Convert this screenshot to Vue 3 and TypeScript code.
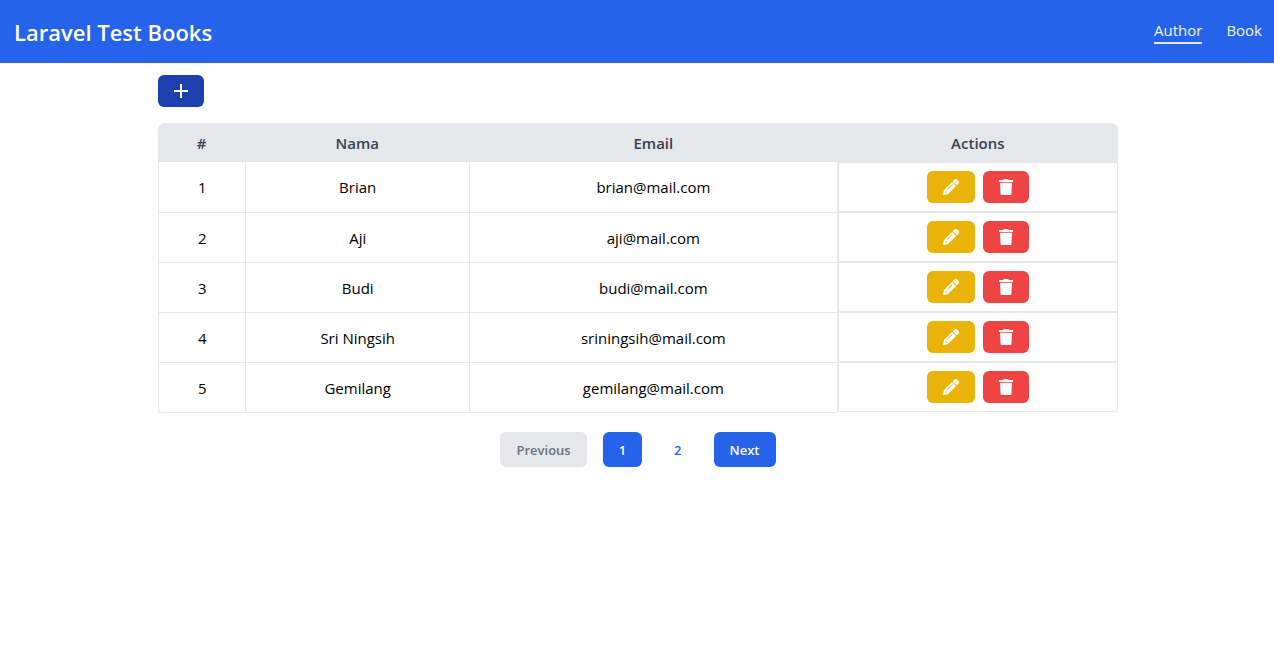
<script setup lang="ts">
import { computed, ref } from 'vue'

interface Author {
  id: number
  name: string
  email: string
}

const menu = ['Author', 'Book']
const active = ref('Author')
const page = ref(1)
const pages = [1, 2]

const authors: Author[] = [
  { id: 1, name: 'Brian', email: 'brian@mail.com' },
  { id: 2, name: 'Aji', email: 'aji@mail.com' },
  { id: 3, name: 'Budi', email: 'budi@mail.com' },
  { id: 4, name: 'Sri Ningsih', email: 'sriningsih@mail.com' },
  { id: 5, name: 'Gemilang', email: 'gemilang@mail.com' },
]

const isFirst = computed(() => page.value === 1)
const isLast = computed(() => page.value === pages.length)
</script>

<template>
  <div class="app">
    <header class="navbar">
      <h1 class="brand">Laravel Test Books</h1>
      <nav class="menu">
        <a
          v-for="item in menu"
          :key="item"
          href="#"
          class="menu-link"
          :class="{ active: item === active }"
          @click.prevent="active = item"
        >{{ item }}</a>
      </nav>
    </header>

    <main class="content">
      <div class="container">
        <button type="button" class="btn add" aria-label="Add author">
          <svg viewBox="0 0 14 14" width="14" height="14" aria-hidden="true">
            <path d="M6 0h2v6h6v2H8v6H6V8H0V6h6z" />
          </svg>
        </button>

        <div class="table-wrap">
          <table class="table">
            <colgroup>
              <col class="col-no" />
              <col class="col-name" />
              <col class="col-email" />
              <col />
            </colgroup>
            <thead>
              <tr>
                <th scope="col">#</th>
                <th scope="col">Nama</th>
                <th scope="col">Email</th>
                <th scope="col">Actions</th>
              </tr>
            </thead>
            <tbody>
              <tr v-for="author in authors" :key="author.id">
                <td>{{ author.id }}</td>
                <td>{{ author.name }}</td>
                <td class="email">{{ author.email }}</td>
                <td class="actions-cell">
                  <div class="actions">
                    <button type="button" class="btn edit" :aria-label="`Edit ${author.name}`">
                      <svg viewBox="0 0 512 512" width="16" height="16" aria-hidden="true">
                        <path fill-rule="evenodd" d="M290 92L46 336c-10 10-16 20-19 34L1 484c-3 16 11 30 27 27l114-26c14-3 24-9 34-19L420 222zM128 344c-5-5-5-13 0-18l158-158c5-5 13-5 18 0s5 13 0 18L146 344c-5 5-13 5-18 0zM84 388h40v40l-30 8-18-18z" />
                        <path d="M493 59c25 25 25 65 0 90l-53 53L310 72l53-53c25-25 65-25 90 0z" />
                      </svg>
                    </button>
                    <button type="button" class="btn delete" :aria-label="`Delete ${author.name}`">
                      <svg viewBox="0 0 448 512" width="14" height="16" aria-hidden="true">
                        <path d="M440 32H312l-9-19C299 5 291 0 282 0H166c-9 0-17 5-22 13l-8 19H8C4 32 0 36 0 40v48c0 4 4 8 8 8h432c4 0 8-4 8-8V40c0-4-4-8-8-8zM32 122l20 370c1 12 8 20 20 20h304c12 0 19-8 20-20l20-370z" />
                      </svg>
                    </button>
                  </div>
                </td>
              </tr>
            </tbody>
          </table>
        </div>

        <nav class="pagination" aria-label="Pagination">
          <button type="button" class="page-btn solid" :disabled="isFirst" @click="page--">Previous</button>
          <button
            v-for="n in pages"
            :key="n"
            type="button"
            class="page-btn"
            :class="{ solid: n === page }"
            @click="page = n"
          >{{ n }}</button>
          <button type="button" class="page-btn solid" :disabled="isLast" @click="page++">Next</button>
        </nav>
      </div>
    </main>
  </div>
</template>

<style>
body {
  margin: 0;
  background: #fff;
}
</style>

<style scoped>
.app {
  font-family: 'Segoe UI', 'Open Sans', 'Noto Sans', sans-serif;
  font-size: 15px;
  line-height: 24px;
  color: #000;
}

.app *,
.app *::before {
  box-sizing: border-box;
}

.navbar {
  display: flex;
  align-items: center;
  justify-content: space-between;
  min-height: 63px;
  padding: 0 12px 0 14px;
  background: #2563eb;
  color: #fff;
}

.brand {
  margin: 0;
  font-size: 22px;
  line-height: 32px;
  font-weight: 600;
}

.menu {
  display: flex;
  gap: 24px;
}

.menu-link {
  padding-bottom: 2px;
  line-height: 20px;
  color: #f3f4f6;
  text-decoration: none;
  border-bottom: 2px solid transparent;
}

.menu-link.active {
  border-bottom-color: #e5e7eb;
}

.content {
  padding: 12px 0 0 2px;
}

.container {
  max-width: 960px;
  margin: 0 auto;
}

.btn {
  display: inline-flex;
  align-items: center;
  justify-content: center;
  height: 32px;
  padding: 0 16px;
  border: 0;
  border-radius: 6px;
  cursor: pointer;
}

.btn svg {
  display: block;
  fill: #fff;
}

.add {
  display: flex;
  background: #1e40af;
}

.edit {
  background: #eab308;
}

.delete {
  background: #ef4444;
}

.table-wrap {
  margin-top: 16px;
  border-radius: 8px 8px 0 0;
  overflow: hidden;
  background: #f3f4f6;
}

.table {
  width: 100%;
  table-layout: fixed;
  border-collapse: separate;
  border-spacing: 0;
  text-align: center;
}

.col-no {
  width: 9.1%;
}

.col-name {
  width: 23.3%;
}

.col-email {
  width: 38.4%;
}

th {
  height: 39px;
  padding: 0;
  background: #e5e7eb;
  color: #374151;
  font-weight: 600;
}

td {
  padding: 0;
  background: #fff;
  border-left: 1px solid #e5e7eb;
}

tr + tr td:not(.actions-cell) {
  border-top: 1px solid #e5e7eb;
}

tr:last-child td:not(.actions-cell) {
  border-bottom: 1px solid #e5e7eb;
}

tr:last-child td:first-child {
  border-bottom-left-radius: 5px;
}

td.email {
  border-right: 1px solid #e5e7eb;
}

td.actions-cell {
  border: 0;
  vertical-align: top;
}

tr:last-child td.actions-cell {
  padding-bottom: 1px;
  border-bottom-right-radius: 5px;
}

.actions {
  display: flex;
  justify-content: center;
  gap: 8px;
  padding: 8px;
  border: 1px solid #e5e7eb;
}

tr:last-child .actions {
  border-bottom-right-radius: 5px;
}

.pagination {
  display: flex;
  justify-content: center;
  gap: 16px;
  margin-top: 19px;
}

.page-btn {
  height: 35px;
  padding: 0 16px;
  border: 0;
  border-radius: 6px;
  background: transparent;
  color: #2563eb;
  font-family: inherit;
  font-size: 13px;
  line-height: 20px;
  font-weight: 600;
  cursor: pointer;
}

.page-btn.solid {
  background: #2563eb;
  color: #fff;
}

.page-btn:disabled {
  background: #e5e7eb;
  color: #6b7280;
  cursor: default;
}
</style>
